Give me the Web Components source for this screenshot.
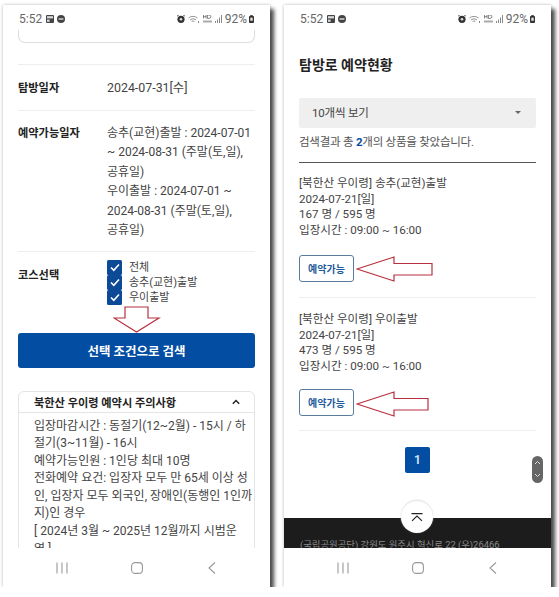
<!DOCTYPE html>
<html lang="ko">
<head>
<meta charset="utf-8">
<title>탐방로 예약현황</title>
<style>
html,body{margin:0;padding:0;background:#fff}
body{font-family:Roboto,"Noto Sans CJK KR",sans-serif;color:#444;font-size:12px}
#stage{display:flex;gap:14px;padding:5px 0 0 3px}
</style>
</head>
<body>
<div id="stage">
  <phone-frame>
    <top-card></top-card>
    <form-row label="탐방일자" style="--row-h:46px;--align:center;--pad:1px 0 0;--fs:12.4px;--label-top:1px">2024-07-31[수]</form-row>
    <form-row label="예약가능일자" style="--pad:13px 0 11px">송추(교현)출발 : 2024-07-01<br>~ 2024-08-31 (주말(토,일),<br>공휴일)<br>우이출발 : 2024-07-01 ~<br>2024-08-31 (주말(토,일),<br>공휴일)</form-row>
    <form-row label="코스선택" style="--pad:8px 0 6px;--label-top:6px">
      <check-item>전체</check-item>
      <check-item>송추(교현)출발</check-item>
      <check-item>우이출발</check-item>
    </form-row>
    <search-button>선택 조건으로 검색</search-button>
    <notice-card heading="북한산 우이령 예약시 주의사항">입장마감시간 : 동절기(12~2월) - 15시 / 하<br>절기(3~11월) - 16시<br>예약가능인원 : 1인당 최대 10명<br>전화예약 요건: 입장자 모두 만 65세 이상 성<br>인, 입장자 모두 외국인, 장애인(동행인 1인까<br>지)인 경우<br>[ 2024년 3월 ~ 2025년 12월까지 시범운<br>영 ]</notice-card>
    <red-arrow slot="overlay" dir="down"></red-arrow>
  </phone-frame>
  <phone-frame>
    <page-title>탐방로 예약현황</page-title>
    <select-box>10개씩 보기</select-box>
    <result-count>검색결과 총 <b>2</b>개의 상품을 찾았습니다.</result-count>
    <result-item style="--top:13px;--gap:16px;--bottom:15px">[북한산 우이령] 송추(교현)출발<br>2024-07-21[일]<br>167 명 / 595 명<br>입장시간 : 09:00 ~ 16:00</result-item>
    <result-item style="--top:14px;--gap:14px;--bottom:14px">[북한산 우이령] 우이출발<br>2024-07-21[일]<br>473 명 / 595 명<br>입장시간 : 09:00 ~ 16:00</result-item>
    <page-number>1</page-number>
    <site-footer>(국립공원공단) 강원도 원주시 혁신로 22 (우)26466</site-footer>
    <red-arrow slot="overlay" dir="left" len="76" style="--x:72px;--y:251px"></red-arrow>
    <red-arrow slot="overlay" dir="left" len="72" style="--x:72px;--y:386px"></red-arrow>
    <scroll-pill slot="overlay"></scroll-pill>
    <top-fab slot="overlay"></top-fab>
  </phone-frame>
</div>
<script>
function def(name, html){
  customElements.define(name, class extends HTMLElement{
    connectedCallback(){
      if(this.shadowRoot) return;
      const r=this.attachShadow({mode:'open'});
      r.innerHTML = typeof html==='function' ? html(this) : html;
    }
  });
}
def('phone-frame',`<style>
:host{display:flex;flex-direction:column;width:267px;height:582px;background:#fff;position:relative;
box-shadow:4px 4px 4px #4a4a4a,0 0 3px #bbb;flex:none}
main{flex:1;min-height:0;overflow:hidden;display:flex;flex-direction:column;padding:0 15px}
</style><status-bar></status-bar><main><slot></slot></main><nav-bar></nav-bar><slot name="overlay"></slot>`);
def('status-bar',`<style>
:host{display:flex;align-items:center;height:25px;padding:3px 16px 0;box-sizing:border-box;gap:3px;font:12px Roboto,sans-serif;color:#666;flex:none;background:#fff}
svg{display:block;flex:none}
i{flex:1}
.t{margin-right:1px}
</style>
<span class="t">5:52</span>
<svg width="8" height="8" viewBox="0 0 8 8"><rect width="8" height="8" rx="1" fill="#444"/><rect x="1" y="1.2" width="6" height="2.2" fill="#ddd"/><rect x="1" y="4.6" width="2.6" height="2.2" fill="#ddd"/></svg>
<svg width="8" height="8" viewBox="0 0 8 8"><circle cx="4" cy="4" r="4" fill="#444"/><rect x="1.6" y="3.3" width="4.8" height="1.4" fill="#ddd"/></svg>
<i></i>
<svg width="8" height="8" viewBox="0 0 8 8"><circle cx="4" cy="4.3" r="3.6" fill="#333"/><circle cx="4" cy="4.3" r="1.3" fill="#ddd"/><path d="M0 1.5 1.5 0M8 1.5 6.5 0" stroke="#333"/></svg>
<svg width="12" height="9" viewBox="0 0 12 9" fill="none" stroke="#888" stroke-width=".9"><path d="M.5 3a7 7 0 0 1 9 0M2 4.800a5 5 0 0 1 6 0M3.600 6.400a2.600 2.600 0 0 1 2.800 0"/><path d="M10.500 6v2" stroke="#777"/></svg>
<svg width="9" height="8" viewBox="0 0 9 8"><path d="M.5 0v3.400M3 0v3.400M.5 1.700H3M4.400 0v3.400h1.500q2 0 2-1.700T5.900 0H4.400Z" fill="none" stroke="#666" stroke-width=".8"/><path d="M0 5.500h9v2H0Z" fill="#aaa"/></svg>
<svg width="7" height="8" viewBox="0 0 7 8" fill="#888"><rect x="0" y="6" width="1" height="2"/><rect x="2" y="4.500" width="1" height="3.500"/><rect x="4" y="2.500" width="1" height="5.500"/><rect x="6" y="0" width="1" height="8"/></svg>
<span style="font-size:12px;margin-right:-1px">92%</span>
<svg width="5" height="8" viewBox="0 0 6 9" preserveAspectRatio="none"><rect y="1" width="6" height="8" rx="1" fill="#333"/><rect x="1.500" width="3" height="1" fill="#333"/><rect x="1.500" y="3" width="3" height="3.500" fill="#ddd"/></svg>`);
def('nav-bar',`<style>
:host{display:flex;justify-content:space-between;align-items:center;height:39px;padding:0 54px 0 53px;box-sizing:border-box;flex:none;background:#fff}
svg{display:block}
.s{margin-left:-3px}
</style>
<svg width="12" height="12" viewBox="0 0 12 12" stroke="#999" stroke-width="1.100" fill="none"><path d="M1 .5v11M6 .5v11M11 .5v11"/></svg>
<svg class="s" width="12" height="12" viewBox="0 0 12 12" stroke="#999" stroke-width="1.100" fill="none"><rect x=".6" y=".6" width="10.800" height="10.800" rx="3.500"/></svg>
<svg width="8" height="12" viewBox="0 0 8 12" stroke="#999" stroke-width="1.100" fill="none"><path d="M7 .5 1 6l6 5.500"/></svg>`);
def('top-card',`<style>:host{display:block;height:13px;border:1px solid #ddd;border-top:0;border-radius:0 0 7px 7px;box-sizing:border-box;flex:none;margin-bottom:21px}</style>`);
def('form-row',el=>`<style>
:host{display:grid;grid-template-columns:89px 1fr;border-top:1px solid #eee;padding:var(--pad,0);min-height:var(--row-h,0);box-sizing:border-box;align-items:var(--align,start);flex:none;font-size:var(--fs,12px);line-height:19.4px;color:#444}
b{font-weight:700;font-size:11.200px;color:#222;padding-top:var(--label-top,0)}
</style><b>${el.getAttribute('label')}</b><div><slot></slot></div>`);
def('check-item',`<style>
:host{display:flex;align-items:center;gap:7px;height:14.700px;font-size:11px;line-height:15px;color:#444}
span{width:15px;height:15px;background:#0c4a97;border-radius:1.500px;flex:none;display:flex;align-items:center;justify-content:center}
</style><span><svg width="10" height="9" viewBox="0 0 10 9" fill="none" stroke="#fff" stroke-width="1.600"><path d="M1 4.500 3.800 7.400 9 1.500"/></svg></span><slot></slot>`);
def('search-button',`<style>
:host{display:flex;align-items:center;justify-content:center;height:35px;margin-top:22px;border-radius:3px;background:#034ea2;color:#fff;font-size:12.500px;font-weight:700;flex:none}
</style><slot></slot>`);
def('notice-card',el=>`<style>
:host{display:block;margin-top:23px;border:1px solid #e4e4e4;border-radius:6px 6px 0 0;flex:none}
header{display:flex;justify-content:space-between;align-items:center;height:20px;padding:0 15px;border-bottom:1px solid #e4e4e4;font-size:11.200px;font-weight:700;color:#222}
svg{display:block;margin-right:-1px}
div{padding:5px 10px 0 15px;font-size:12px;line-height:17.600px;color:#444;white-space:nowrap}
</style><header>${el.getAttribute('heading')}<svg width="8" height="6" viewBox="0 0 8 6" fill="none" stroke="#222" stroke-width="1.400"><path d="M.8 4.800 4 1.400l3.200 3.400"/></svg></header><div><slot></slot></div>`);
def('page-title',`<style>:host{display:block;font-size:14px;font-weight:700;color:#222;line-height:20px;margin-top:25px;flex:none}</style><slot></slot>`);
def('select-box',`<style>
:host{display:flex;align-items:center;justify-content:space-between;height:30px;margin-top:23px;padding:0 15px 2px 13px;box-sizing:border-box;background:#efefef;border-radius:2px;font-size:11.500px;letter-spacing:-.2px;color:#444;flex:none}
i{border:3px solid transparent;border-top:3.500px solid #666;border-bottom:0}
</style><slot></slot><i></i>`);
def('result-count',`<style>
:host{display:block;font-size:11.500px;letter-spacing:-.24px;line-height:20px;margin-top:4px;padding-bottom:10px;border-bottom:1px solid #555;color:#555;flex:none}
::slotted(b){color:#034ea2}
</style><slot></slot>`);
def('result-item',`<style>
:host{display:block;padding:var(--top,12px) 0 var(--bottom,15px);border-bottom:1px solid #eee;flex:none;font-size:11.600px;line-height:15.700px;color:#444}
button{display:flex;align-items:center;justify-content:center;width:55px;height:27px;margin-top:var(--gap,16px);padding:0;background:#fff;border:1px solid #5a7d9e;border-radius:3px;font:700 10px Roboto,"Noto Sans CJK KR",sans-serif;color:#1d5b9a}
</style><slot></slot><button>예약가능</button>`);
def('page-number',`<style>
:host{display:flex;align-items:center;justify-content:center;width:25px;height:26px;margin:16px auto 0;background:#034ea2;border-radius:2px;color:#cfe0f2;font-size:12px;font-weight:700;flex:none}
</style><slot></slot>`);
def('site-footer',`<style>
:host{display:block;flex:none;margin:45px -15px 0;padding:20px 16px 20px;background:#1c1c1c;color:#8a8a8a;font-size:9.400px;line-height:13px;white-space:nowrap}
</style><slot></slot>`);
def('top-fab',`<style>
:host{position:absolute;left:117px;top:496px;width:32px;height:32px;border-radius:50%;background:#fff;box-shadow:0 -1px 2px #ddd;display:flex;align-items:center;justify-content:center}
</style><svg width="12" height="9" viewBox="0 0 12 9" fill="none" stroke="#222" stroke-width="1.100"><path d="M.5 .6h11M1 7.800 6 3l5 4.800"/></svg>`);
def('scroll-pill',`<style>
:host{position:absolute;left:248px;top:451px;width:11px;height:27px;border-radius:6px;background:#666;display:block}
svg{display:block;margin:4px auto 0}
</style><svg width="7" height="19" viewBox="0 0 7 19" fill="none" stroke="#ddd"><path d="M1 4 3.500 1.500 6 4M1 14l2.500 2.500L6 14"/></svg>`);
def('red-arrow',el=>{
  const len=+el.getAttribute('len')||76;
  return el.getAttribute('dir')==='down'
? `<style>:host{position:absolute;left:110px;top:301px;display:block}svg{display:block}</style><svg width="48" height="28" viewBox="0 0 48 28" fill="#fff" stroke="#b8303e" stroke-width="1.200"><path d="M12 1H35V12H46L23.500 26 1 12H12Z"/></svg>`
: `<style>:host{position:absolute;left:var(--x);top:var(--y);display:block}svg{display:block}</style><svg width="${len+2}" height="26" viewBox="0 0 ${len+2} 26" fill="#fff" stroke="#b8303e" stroke-width="1.200"><path d="M1 13 38 1V7.500H${len}V19H38V25Z"/></svg>`;
});
</script>
</body>
</html>
